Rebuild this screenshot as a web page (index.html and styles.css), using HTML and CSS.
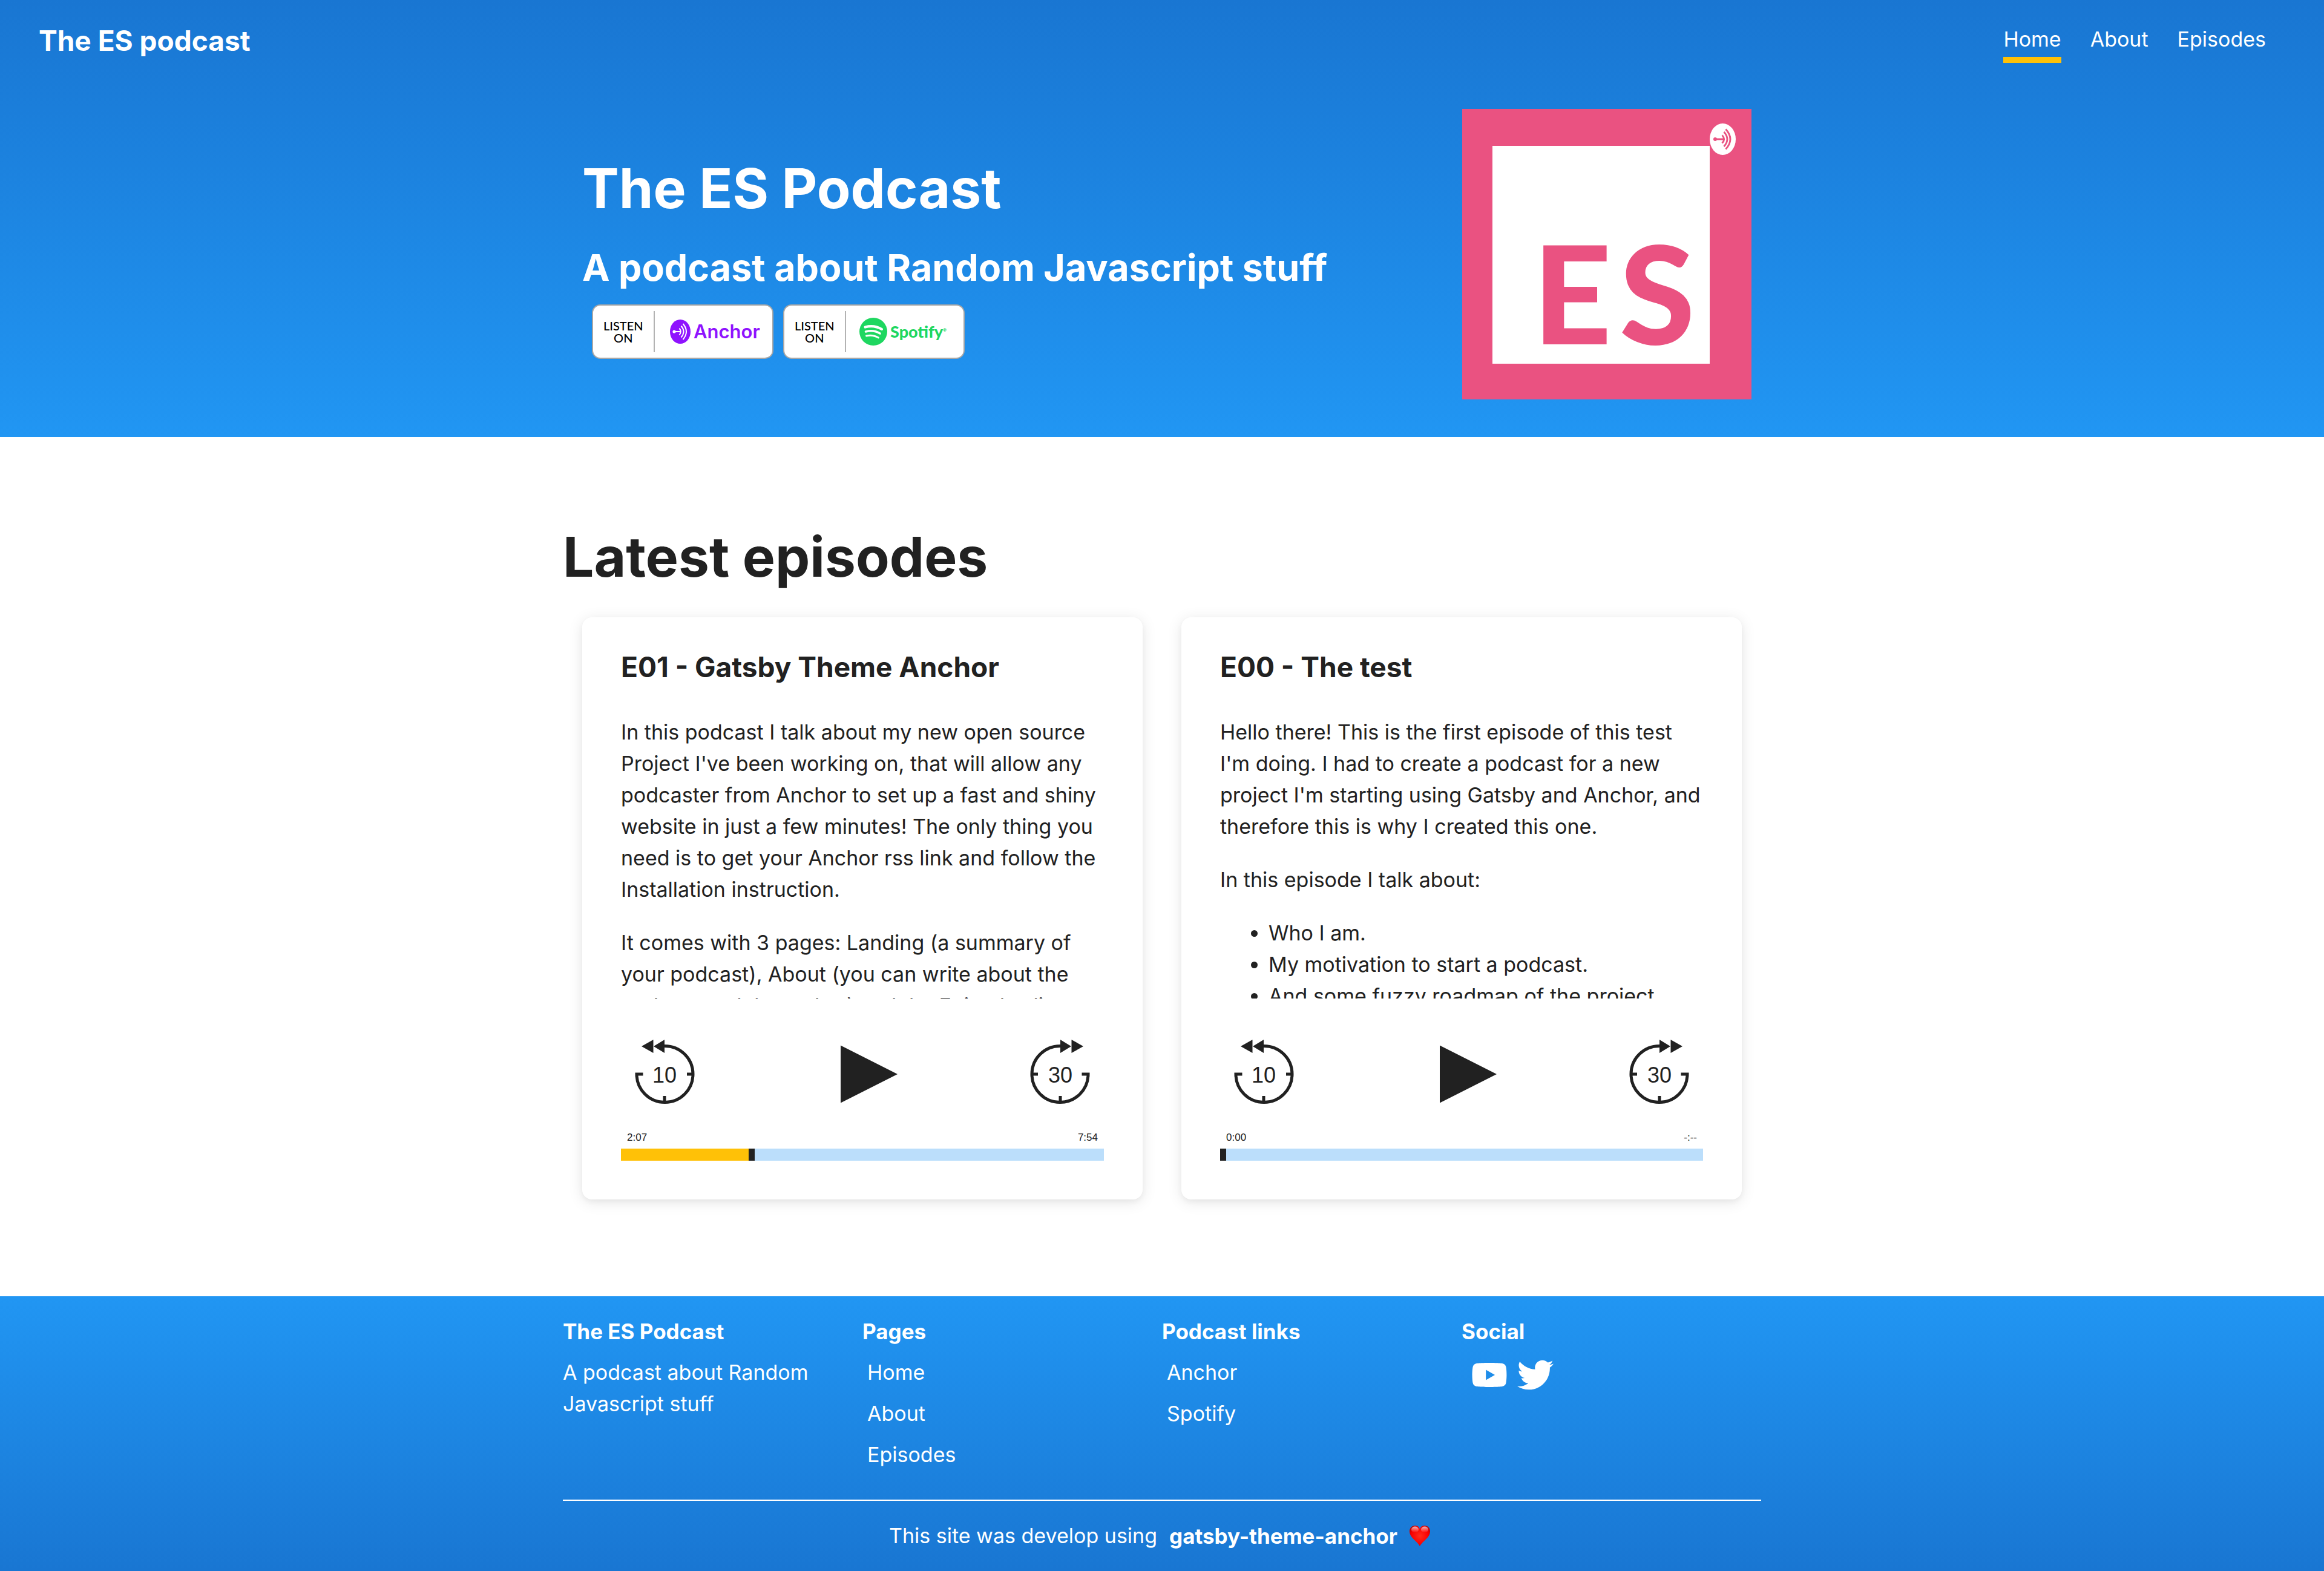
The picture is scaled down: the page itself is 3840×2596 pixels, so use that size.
FILE: index.html
```html
<!DOCTYPE html>
<html lang="en">
<head>
<meta charset="utf-8">
<meta name="viewport" content="width=device-width, initial-scale=1">
<title>The ES podcast</title>
<link rel="stylesheet" href="styles.css">
</head>
<body>
<header class="header">
  <div class="navbar">
    <a class="brand" href="#">The ES podcast</a>
    <nav class="nav" aria-label="Main">
      <a class="nav-link nav-link-active" href="#" aria-current="page">Home</a>
      <a class="nav-link" href="#">About</a>
      <a class="nav-link" href="#">Episodes</a>
    </nav>
  </div>
  <div class="hero container">
    <div class="hero-text">
      <h1 class="hero-title">The ES Podcast</h1>
      <h2 class="hero-subtitle">A podcast about Random Javascript stuff</h2>
      <div class="badges">
        <a class="badge" href="#">
          <span class="badge-label">LISTEN<br>ON</span>
          <span class="badge-brand badge-anchor">
            <svg class="anchor-icon" viewBox="0 0 34 40" aria-hidden="true">
              <ellipse cx="17" cy="20" rx="17" ry="20" fill="currentColor"/>
              <circle cx="7" cy="20" r="2.6" fill="#fff"/>
              <path d="M7 20h11M15.500 14.500q4.500 5.500 0 11M18.500 10.500q8 9.500 0 19M21.500 7q11 13 0 26" fill="none" stroke="#fff" stroke-width="2"/>
            </svg>
            <span class="anchor-name">Anchor</span>
          </span>
        </a>
        <a class="badge" href="#">
          <span class="badge-label">LISTEN<br>ON</span>
          <span class="badge-brand badge-spotify">
            <svg class="spotify-icon" viewBox="0 0 46 46" aria-hidden="true">
              <circle cx="23" cy="23" r="23" fill="currentColor"/>
              <path d="M9.500 15.500q14.500-4 27.500 3.500" fill="none" stroke="#fff" stroke-width="4.200" stroke-linecap="round"/>
              <path d="M10.500 23q12.500-3.500 23.500 3" fill="none" stroke="#fff" stroke-width="3.600" stroke-linecap="round"/>
              <path d="M11.500 30q10.500-2.500 20 3" fill="none" stroke="#fff" stroke-width="2.900" stroke-linecap="round"/>
            </svg>
            <span class="spotify-name">Spotify<sup class="reg">®</sup></span>
          </span>
        </a>
      </div>
    </div>
    <svg class="cover" viewBox="0 0 478 480" role="img" aria-label="The ES Podcast cover">
      <rect width="478" height="480" fill="#ea5281"/>
      <rect x="50" y="61" width="359" height="360" fill="#fff"/>
      <ellipse cx="430.500" cy="50" rx="21.500" ry="26" fill="#fff"/>
      <circle cx="418" cy="50" r="3" fill="#ea5281"/>
      <path d="M418 50h15M429.500 43.500q6.500 6.500 0 13M432.500 38q11 12 0 24M435.500 33.500q15 16.500 0 33" fill="none" stroke="#ea5281" stroke-width="2.800"/>
      <text class="cover-text" x="117" y="389">E</text>
      <text class="cover-text" x="260" y="389">S</text>
    </svg>
  </div>
</header>

<main class="container main">
  <h2 class="section-title">Latest episodes</h2>
  <div class="episodes">
    <article class="card">
      <h3 class="card-title">E01 - Gatsby Theme Anchor</h3>
      <div class="card-body">
        <p>In this podcast I talk about my new open source Project I've been working on, that will allow any podcaster from Anchor to set up a fast and shiny website in just a few minutes! The only thing you need is to get your Anchor rss link and follow the Installation instruction.</p>
        <p>It comes with 3 pages: Landing (a summary of your podcast), About (you can write about the podcast and the author) and the Episodes list.</p>
      </div>
      <div class="controls">
        <button class="control" type="button" aria-label="Back 10 seconds">
          <svg class="control-icon" viewBox="0 0 144 144" aria-hidden="true">
            <path d="M72 24.500a46.500 46.500 0 1 1-46 46.500h10.500M121 71h-12M72 107v13" fill="none" stroke="currentColor" stroke-width="5"/>
            <path d="M34 25l19.500-11v22zM54 25l18-11v22z" fill="currentColor"/>
            <text class="control-text" x="72" y="85">10</text>
          </svg>
        </button>
        <button class="control" type="button" aria-label="Play">
          <svg class="control-icon" viewBox="0 0 144 144" aria-hidden="true"><path d="M36 23.500l94 47.500-94 47.500z" fill="currentColor"/></svg>
        </button>
        <button class="control" type="button" aria-label="Forward 30 seconds">
          <svg class="control-icon" viewBox="0 0 144 144" aria-hidden="true">
            <path d="M72 24.500a46.500 46.500 0 1 0 46 46.500h-10.500M23 71h12M72 107v13" fill="none" stroke="currentColor" stroke-width="5"/>
            <path d="M110 25l-19.500-11v22zM90 25l-18-11v22z" fill="currentColor"/>
            <text class="control-text" x="72" y="85">30</text>
          </svg>
        </button>
      </div>
      <div class="times"><span>2:07</span><span>7:54</span></div>
      <input class="seek" type="range" min="0" max="474" value="127" style="--played: 27%" aria-label="Position in E01 - Gatsby Theme Anchor">
    </article>

    <article class="card">
      <h3 class="card-title">E00 - The test</h3>
      <div class="card-body">
        <p>Hello there! This is the first episode of this test I'm doing. I had to create a podcast for a new project I'm starting using Gatsby and Anchor, and therefore this is why I created this one.</p>
        <p>In this episode I talk about:</p>
        <ul>
          <li>Who I am.</li>
          <li>My motivation to start a podcast.</li>
          <li>And some fuzzy roadmap of the project.</li>
        </ul>
      </div>
      <div class="controls">
        <button class="control" type="button" aria-label="Back 10 seconds">
          <svg class="control-icon" viewBox="0 0 144 144" aria-hidden="true">
            <path d="M72 24.500a46.500 46.500 0 1 1-46 46.500h10.500M121 71h-12M72 107v13" fill="none" stroke="currentColor" stroke-width="5"/>
            <path d="M34 25l19.500-11v22zM54 25l18-11v22z" fill="currentColor"/>
            <text class="control-text" x="72" y="85">10</text>
          </svg>
        </button>
        <button class="control" type="button" aria-label="Play">
          <svg class="control-icon" viewBox="0 0 144 144" aria-hidden="true"><path d="M36 23.500l94 47.500-94 47.500z" fill="currentColor"/></svg>
        </button>
        <button class="control" type="button" aria-label="Forward 30 seconds">
          <svg class="control-icon" viewBox="0 0 144 144" aria-hidden="true">
            <path d="M72 24.500a46.500 46.500 0 1 0 46 46.500h-10.500M23 71h12M72 107v13" fill="none" stroke="currentColor" stroke-width="5"/>
            <path d="M110 25l-19.500-11v22zM90 25l-18-11v22z" fill="currentColor"/>
            <text class="control-text" x="72" y="85">30</text>
          </svg>
        </button>
      </div>
      <div class="times"><span>0:00</span><span>-:--</span></div>
      <input class="seek" type="range" min="0" max="474" value="0" style="--played: 0%" aria-label="Position in E00 - The test">
    </article>
  </div>
</main>

<footer class="footer">
  <div class="container">
    <div class="footer-columns">
      <section>
        <h4 class="footer-title">The ES Podcast</h4>
        <p class="footer-about">A podcast about Random Javascript stuff</p>
      </section>
      <nav class="footer-nav" aria-label="Pages">
        <h4 class="footer-title">Pages</h4>
        <a class="footer-link" href="#">Home</a>
        <a class="footer-link" href="#">About</a>
        <a class="footer-link" href="#">Episodes</a>
      </nav>
      <nav class="footer-nav" aria-label="Podcast links">
        <h4 class="footer-title">Podcast links</h4>
        <a class="footer-link" href="#">Anchor</a>
        <a class="footer-link" href="#">Spotify</a>
      </nav>
      <section>
        <h4 class="footer-title">Social</h4>
        <div class="social">
          <a class="social-link" href="#" aria-label="YouTube">
            <svg class="social-icon" viewBox="0 -32 576 576" aria-hidden="true"><path fill="currentColor" d="M549.655 124.083c-6.281-23.650-24.787-42.276-48.284-48.597C458.781 64 288 64 288 64S117.220 64 74.629 75.486c-23.497 6.322-42.003 24.947-48.284 48.597-11.412 42.867-11.412 132.305-11.412 132.305s0 89.438 11.412 132.305c6.281 23.650 24.787 41.500 48.284 47.821C117.220 448 288 448 288 448s170.780 0 213.371-11.486c23.497-6.321 42.003-24.171 48.284-47.821 11.412-42.867 11.412-132.305 11.412-132.305s0-89.438-11.412-132.305zm-317.510 213.508V175.185l142.739 81.205-142.739 81.201z"/></svg>
          </a>
          <a class="social-link" href="#" aria-label="Twitter">
            <svg class="social-icon" viewBox="0 0 512 512" aria-hidden="true"><path fill="currentColor" d="M459.370 151.716c.325 4.548.325 9.097.325 13.645 0 138.720-105.583 298.558-298.558 298.558-59.452 0-114.680-17.219-161.137-47.106 8.447.974 16.568 1.299 25.340 1.299 49.055 0 94.213-16.568 130.274-44.832-46.132-.975-84.792-31.188-98.112-72.772 6.498.974 12.995 1.624 19.818 1.624 9.421 0 18.843-1.300 27.614-3.573-48.081-9.747-84.143-51.980-84.143-102.985v-1.299c13.969 7.797 30.214 12.670 47.431 13.319-28.264-18.843-46.781-51.005-46.781-87.391 0-19.492 5.197-37.360 14.294-52.954 51.655 63.675 129.300 105.258 216.365 109.807-1.624-7.797-2.599-15.918-2.599-24.040 0-57.828 46.782-104.934 104.934-104.934 30.213 0 57.502 12.670 76.670 33.137 23.715-4.548 46.456-13.320 66.599-25.340-7.798 24.366-24.366 44.833-46.132 57.827 21.117-2.273 41.584-8.122 60.426-16.243-14.292 20.791-32.161 39.308-52.628 54.253z"/></svg>
          </a>
        </div>
      </section>
    </div>
    <div class="credits">
      <span>This site was develop using</span>
      <a class="credits-link" href="#">gatsby-theme-anchor</a>
      <svg class="heart" viewBox="0 0 34 34" role="img" aria-label="love">
        <defs>
          <radialGradient id="heart-fill" cx="50%" cy="50%" r="60%"><stop offset="0" stop-color="#ff2a1a"/><stop offset=".7" stop-color="#f80000"/><stop offset="1" stop-color="#b80000"/></radialGradient>
          <linearGradient id="heart-shine" x1="0" y1="0" x2="0" y2="1"><stop offset="0" stop-color="#fff" stop-opacity=".7"/><stop offset="1" stop-color="#fff" stop-opacity="0"/></linearGradient>
        </defs>
        <path d="M17 34C13 26 0 20 0 9.500 0 4 4 0 9 0c4 0 7 2 8 6 1-4 4-6 8-6 5 0 9 4 9 9.500C34 20 21 26 17 34z" fill="url(#heart-fill)"/>
        <ellipse cx="9" cy="6.500" rx="6" ry="5" fill="url(#heart-shine)"/>
        <ellipse cx="25" cy="6.500" rx="6" ry="5" fill="url(#heart-shine)"/>
      </svg>
    </div>
  </div>
</footer>
</body>
</html>
```
FILE: styles.css
```css
* {
  box-sizing: border-box;
}

body {
  margin: 0;
  background: #fff;
  color: #212121;
  font-family: Inter, "Liberation Sans", sans-serif;
  font-size: 34px;
  line-height: 52px;
}

h1, h2, h3, h4, p {
  margin: 0;
}

a {
  color: inherit;
  text-decoration: none;
}

.container {
  max-width: 1980px;
  margin: 0 auto;
}

/* Header */
.header {
  padding-bottom: 62px;
  background: linear-gradient(#1976d2, #2196f3);
  color: #fff;
}

.navbar {
  display: flex;
  justify-content: space-between;
  align-items: flex-start;
  min-height: 180px;
  padding: 35px 96px 0 64px;
}

.brand {
  font-size: 46px;
  font-weight: 700;
  line-height: 64px;
}

.nav {
  display: flex;
  gap: 48px;
  padding-top: 4px;
}

.nav-link {
  padding-bottom: 3px;
  border-bottom: 10px solid transparent;
}

.nav-link-active {
  border-color: #ffc107;
}

.hero {
  display: flex;
  justify-content: space-between;
  align-items: flex-start;
  padding: 0 16px 0 32px;
}

.hero-text {
  padding-top: 73px;
}

.hero-title {
  margin-bottom: 34px;
  font-size: 91px;
  line-height: 116px;
}

.hero-subtitle {
  margin-bottom: 22px;
  font-size: 61px;
  line-height: 78px;
}

.badges {
  display: flex;
  gap: 16px;
  padding-left: 16px;
}

.badge {
  display: flex;
  width: 300px;
  height: 90px;
  padding: 9px 0;
  border: 2px solid #a6a6a6;
  border-radius: 14px;
  background: #fff;
}

.badge-label {
  display: flex;
  align-items: center;
  width: 102px;
  padding-left: 17px;
  border-right: 2px solid #b3b3b3;
  color: #000;
  font: 500 20px/20px Lato, sans-serif;
  text-align: center;
}

.badge-brand {
  display: flex;
  align-items: center;
  flex: 1;
}

.badge-anchor {
  gap: 5px;
  padding-left: 25px;
  color: #8f13fe;
}

.anchor-icon {
  width: 34px;
  height: 40px;
}

.anchor-name {
  font: 600 31px/40px Inter, sans-serif;
}

.badge-spotify {
  gap: 5px;
  padding-left: 22px;
  color: #1ed760;
}

.spotify-icon {
  width: 46px;
  height: 46px;
}

.spotify-name {
  font: 900 27px/40px Lato, sans-serif;
}

.reg {
  font-size: 7px;
  line-height: 8px;
}

.cover {
  flex: none;
  width: 478px;
  height: 480px;
}

.cover-text {
  fill: #ea5281;
  font: 900 226px Lato, sans-serif;
}

/* Episodes */
.main {
  padding: 140px 0 160px;
}

.section-title {
  margin-bottom: 42px;
  font-size: 91px;
  line-height: 116px;
}

.episodes {
  display: grid;
  grid-template-columns: 1fr 1fr;
  gap: 64px;
  padding: 0 32px;
}

.card {
  padding: 50px 64px 64px;
  border-radius: 16px;
  background: #fff;
  box-shadow: 0 4px 8px rgba(0, 0, 0, .04), 0 4px 24px rgba(0, 0, 0, .1);
}

.card-title {
  margin-bottom: 50px;
  font-size: 46px;
  line-height: 64px;
}

.card-body {
  height: 466px;
  overflow: hidden;
}

.card-body p,
.card-body ul {
  margin: 0 0 36px;
}

.card-body ul {
  padding-left: 80px;
}

.controls {
  display: flex;
  justify-content: space-between;
  padding-top: 54px;
}

.control {
  padding: 0;
  border: 0;
  background: none;
  color: inherit;
}

.control-icon {
  display: block;
  width: 144px;
  height: 144px;
}

.control-text {
  fill: currentColor;
  font: 36px "Liberation Sans", Arial, sans-serif;
  text-anchor: middle;
}

.times {
  display: flex;
  justify-content: space-between;
  padding: 22px 10px 8px;
  font: 17px/20px "Liberation Sans", Arial, sans-serif;
}

.seek {
  display: block;
  width: 100%;
  height: 20px;
  margin: 0;
  appearance: none;
  background: linear-gradient(#ffc107, #ffc107) 0 0 / var(--played) 100% no-repeat #bbdefb;
}

.seek::-webkit-slider-thumb {
  appearance: none;
  width: 10px;
  height: 20px;
  background: #212121;
}

/* Footer */
.footer {
  padding: 32px 0;
  background: linear-gradient(#2196f3, #1976d2);
  color: #fff;
}

.footer-columns {
  display: grid;
  grid-template-columns: repeat(4, 1fr);
  padding-bottom: 48px;
  border-bottom: 2px solid #fff;
}

.footer-nav {
  display: flex;
  flex-direction: column;
  align-items: flex-start;
  gap: 16px;
}

.footer-title {
  font-size: 35px;
}

.footer-about {
  padding: 16px 64px 0 0;
}

.footer-link {
  padding: 0 8px;
}

.social {
  display: flex;
  gap: 16px;
  padding: 16px 16px 0;
}

.social-icon {
  display: block;
  width: 60px;
  height: 60px;
}

.credits {
  display: flex;
  justify-content: center;
  align-items: center;
  gap: 20px;
  padding: 32px 8px 0 0;
}

.credits-link {
  font-size: 35px;
  font-weight: 700;
}

.heart {
  width: 34px;
  height: 34px;
}
```
